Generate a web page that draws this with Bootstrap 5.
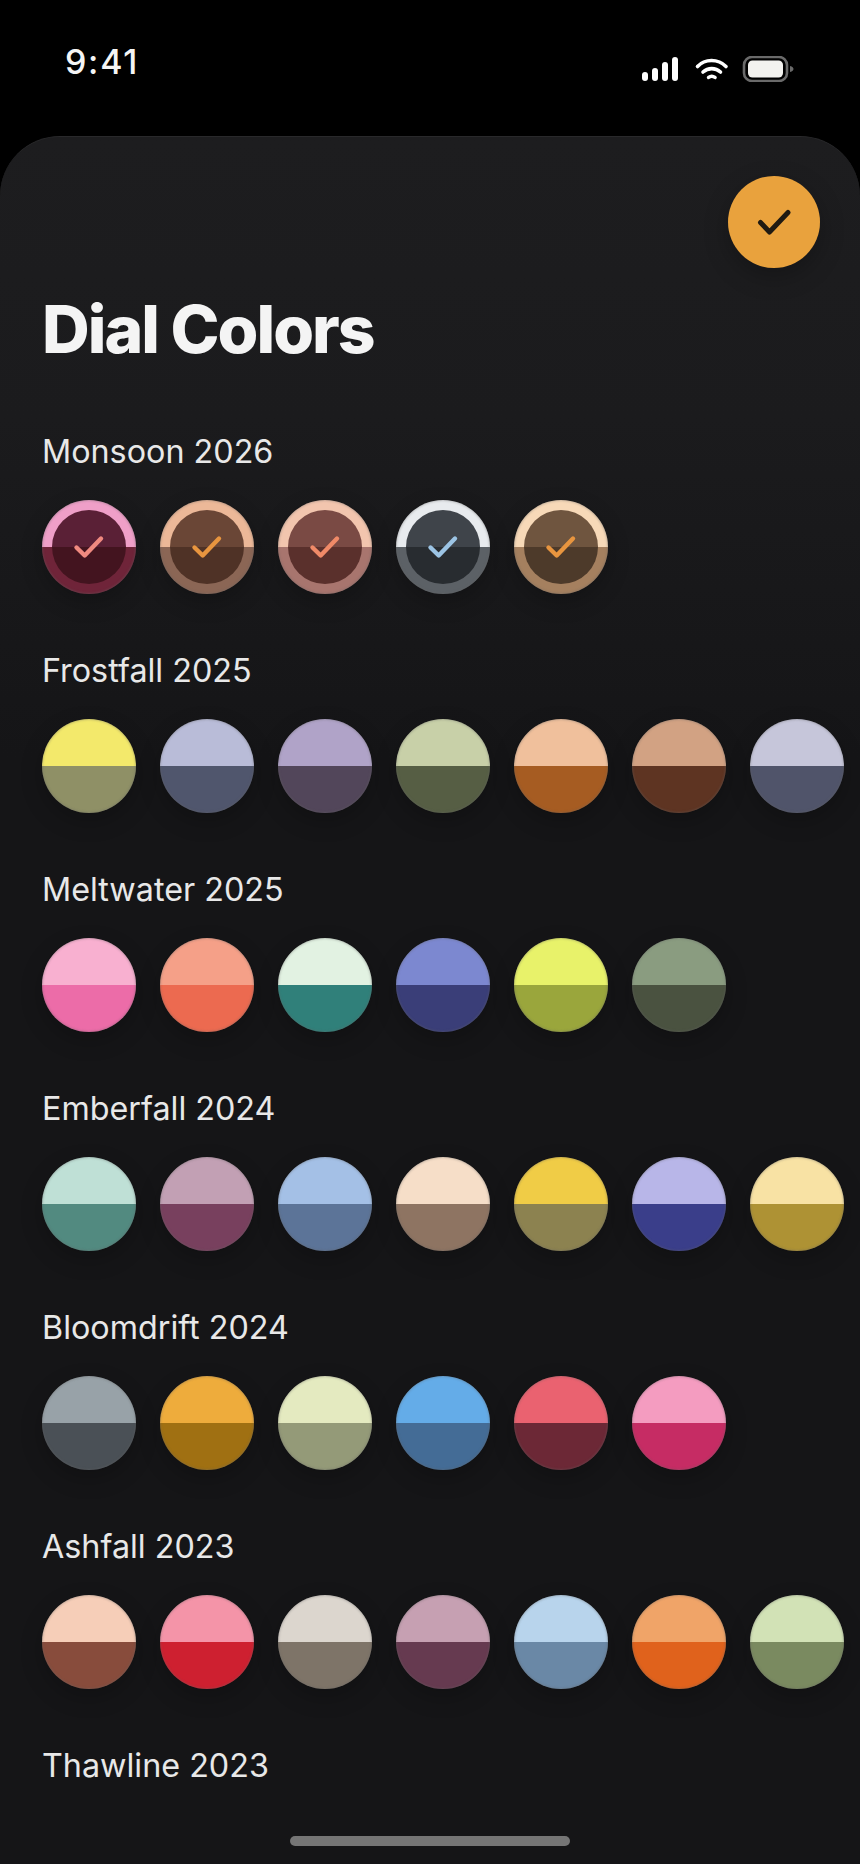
<!DOCTYPE html>
<html lang="en">
<head>
  <meta charset="UTF-8">
  <meta name="viewport" content="width=device-width, initial-scale=1.0">
  <title>Dial Colors</title>
  <link rel="stylesheet" href="https://cdn.jsdelivr.net/npm/bootstrap@5.3.0/dist/css/bootstrap.min.css">
  <style>
    html, body {
      height: 1864px;
      overflow: hidden;
      background-color: #000;
    }
    body {
      font-family: Inter, "Liberation Sans", sans-serif;
    }
    .phone-status {
      height: 136px;
      padding: 43px 66px 0 65px;
    }
    .status-time {
      color: #f5f5f5;
      font-size: 34px;
      font-weight: 500;
      line-height: 38px;
      letter-spacing: .05em;
    }
    .status-icons {
      margin-top: 13px;
    }
    .sheet {
      height: 1728px;
      padding: 39px 0 0 42px;
      border-radius: 60px 60px 0 0;
      border-top: 1px solid #29292b;
      background: linear-gradient(#1d1d1f 0, #1b1b1d 280px, #151517 620px);
    }
    .done-btn {
      width: 92px;
      height: 92px;
      margin-right: 40px;
      padding: 0;
      border: 0;
      border-radius: 50%;
      background-color: #e9a23d;
      box-shadow: 0 8px 24px rgba(0, 0, 0, .25);
    }
    .sheet-title {
      margin: 23px 0 65px;
      color: #f4f4f4;
      font-size: 66px;
      font-weight: 800;
      line-height: 76px;
      letter-spacing: -.03em;
    }
    .season {
      margin-bottom: 57px;
    }
    .season-name {
      margin-bottom: 28px;
      color: #e8e8e8;
      font-size: 32.3px;
      font-weight: 400;
      line-height: 40px;
    }
    .dial-row {
      gap: 24px;
    }
    .dial {
      position: relative;
      width: 94px;
      height: 94px;
      flex: none;
      border-radius: 50%;
      box-shadow: 0 8px 22px rgba(0, 0, 0, .22);
    }
    .dial::after {
      content: "";
      position: absolute;
      inset: 0;
      border-radius: 50%;
      box-shadow: inset 0 0 2px 1px rgba(100, 100, 100, .3);
    }
    .dial-inner {
      position: absolute;
      inset: 10px;
      border-radius: 50%;
    }
    .dial svg {
      position: absolute;
      inset: 0;
      z-index: 1;
    }
    .home-bar {
      position: absolute;
      left: 290px;
      top: 1836px;
      width: 280px;
      height: 10px;
      border-radius: 5px;
      background-color: #757575;
    }
  </style>
</head>
<body>
  <div class="phone-status d-flex justify-content-between align-items-start">
    <span class="status-time">9:41</span>
    <svg class="status-icons" width="152" height="26" viewBox="642 57 152 26">
      <g fill="#fff">
        <rect x="642" y="73" width="6" height="9" rx="3"/>
        <rect x="652" y="69" width="6" height="13" rx="3"/>
        <rect x="662" y="63" width="6" height="19" rx="3"/>
        <rect x="672" y="58" width="6" height="24" rx="3"/>
      </g>
      <g fill="none" stroke="#fff" stroke-width="3.6" stroke-linecap="round">
        <path d="M697.5 67.5C705 59.5 718 59.5 726 67.5"/>
        <path d="M703 73C708 68.5 715.5 68.5 720.5 73"/>
        <path d="M708.6 78.4C710.5 77 713 77 715 78.4"/>
      </g>
      <rect x="744" y="58" width="43" height="24" rx="8" fill="none" stroke="#6a6a6a" stroke-width="2.6"/>
      <rect x="748" y="61.5" width="35" height="17" rx="4.5" fill="#f3f2ef"/>
      <path d="M790 67C792.5 67.5 793.5 69 793.5 70S792.5 72.5 790 73Z" fill="#6a6a6a"/>
    </svg>
  </div>

  <div class="sheet">
    <div class="d-flex justify-content-end">
      <button type="button" class="done-btn" aria-label="Done">
        <svg width="92" height="92" viewBox="0 0 92 92">
          <path d="M32.5 46.5L41.5 56L60 36.5" fill="none" stroke="#1f1a12" stroke-width="5" stroke-linecap="round" stroke-linejoin="round"/>
        </svg>
      </button>
    </div>
    <h1 class="sheet-title">Dial Colors</h1>
    <div id="seasons"></div>
  </div>

  <div class="home-bar"></div>

  <script>
    // [top, bottom] and for the selected ones [innerTop, innerBottom, check]
    const seasons = [
      ["Monsoon 2026", [
        ["#ef9fc8", "#6f2439", "#5a2036", "#43141f", "#f08a80"],
        ["#ecb898", "#8b6655", "#6a4636", "#4f3226", "#e8953f"],
        ["#f2c5ae", "#a8756e", "#7a4a44", "#5a302c", "#f08a68"],
        ["#e8ebee", "#5c6166", "#3f444a", "#282c30", "#9cc4e4"],
        ["#f7d9b8", "#a5805f", "#6f553f", "#4d3a2a", "#e8953f"]
      ]],
      ["Frostfall 2025", [
        ["#f3e96b", "#8f9066"], ["#b9bcd8", "#50566d"], ["#b0a3c8", "#52465a"], ["#c8d0a8", "#565e44"],
        ["#f0c09c", "#a65c22"], ["#d2a283", "#5e3422"], ["#c6c6da", "#50546a"]
      ]],
      ["Meltwater 2025", [
        ["#f8b0d0", "#ec6ca8"], ["#f5a088", "#ec6a50"], ["#e2f2e2", "#30807a"],
        ["#7c88d0", "#3a3e78"], ["#e8f26a", "#9aa63c"], ["#8a9c80", "#4a5240"]
      ]],
      ["Emberfall 2024", [
        ["#bfe0d6", "#528a80"], ["#c2a0b4", "#78405e"], ["#a4c0e6", "#5c7498"], ["#f6dec8", "#8e7462"],
        ["#f0cc46", "#8c8250"], ["#b8b6e8", "#3a3e8a"], ["#f8e2a4", "#ae9234"]
      ]],
      ["Bloomdrift 2024", [
        ["#98a2a8", "#4a5056"], ["#eeac3c", "#a07012"], ["#e4eac0", "#949a78"],
        ["#64ace8", "#446c96"], ["#ea6270", "#6c2836"], ["#f49cc0", "#c62c64"]
      ]],
      ["Ashfall 2023", [
        ["#f6ceb8", "#884c3c"], ["#f494a8", "#ce2030"], ["#dcd6ce", "#7e7468"], ["#c6a0b2", "#663a50"],
        ["#b8d4ec", "#6a88a6"], ["#f0a468", "#e0621c"], ["#d2e2b6", "#7a8a60"]
      ]],
      ["Thawline 2023", []]
    ];

    function half(top, bottom) {
      return `background:linear-gradient(${top} 50%, ${bottom} 50%)`;
    }

    function dial(c) {
      let selected = "";
      if (c.length > 2) {
        selected = `<div class="dial-inner" style="${half(c[2], c[3])}"></div>
          <svg width="94" height="94" viewBox="0 0 94 94"><path d="M34.5 47.5L42.7 55.5L59 38.5" fill="none" stroke="${c[4]}" stroke-width="4.4" stroke-linecap="round" stroke-linejoin="round"/></svg>`;
      }
      return `<div class="dial" style="${half(c[0], c[1])}">${selected}</div>`;
    }

    document.getElementById("seasons").innerHTML = seasons.map(([name, dials]) => `
      <section class="season">
        <h2 class="season-name">${name}</h2>
        <div class="dial-row d-flex">${dials.map(dial).join("")}</div>
      </section>`).join("");
  </script>
</body>
</html>
